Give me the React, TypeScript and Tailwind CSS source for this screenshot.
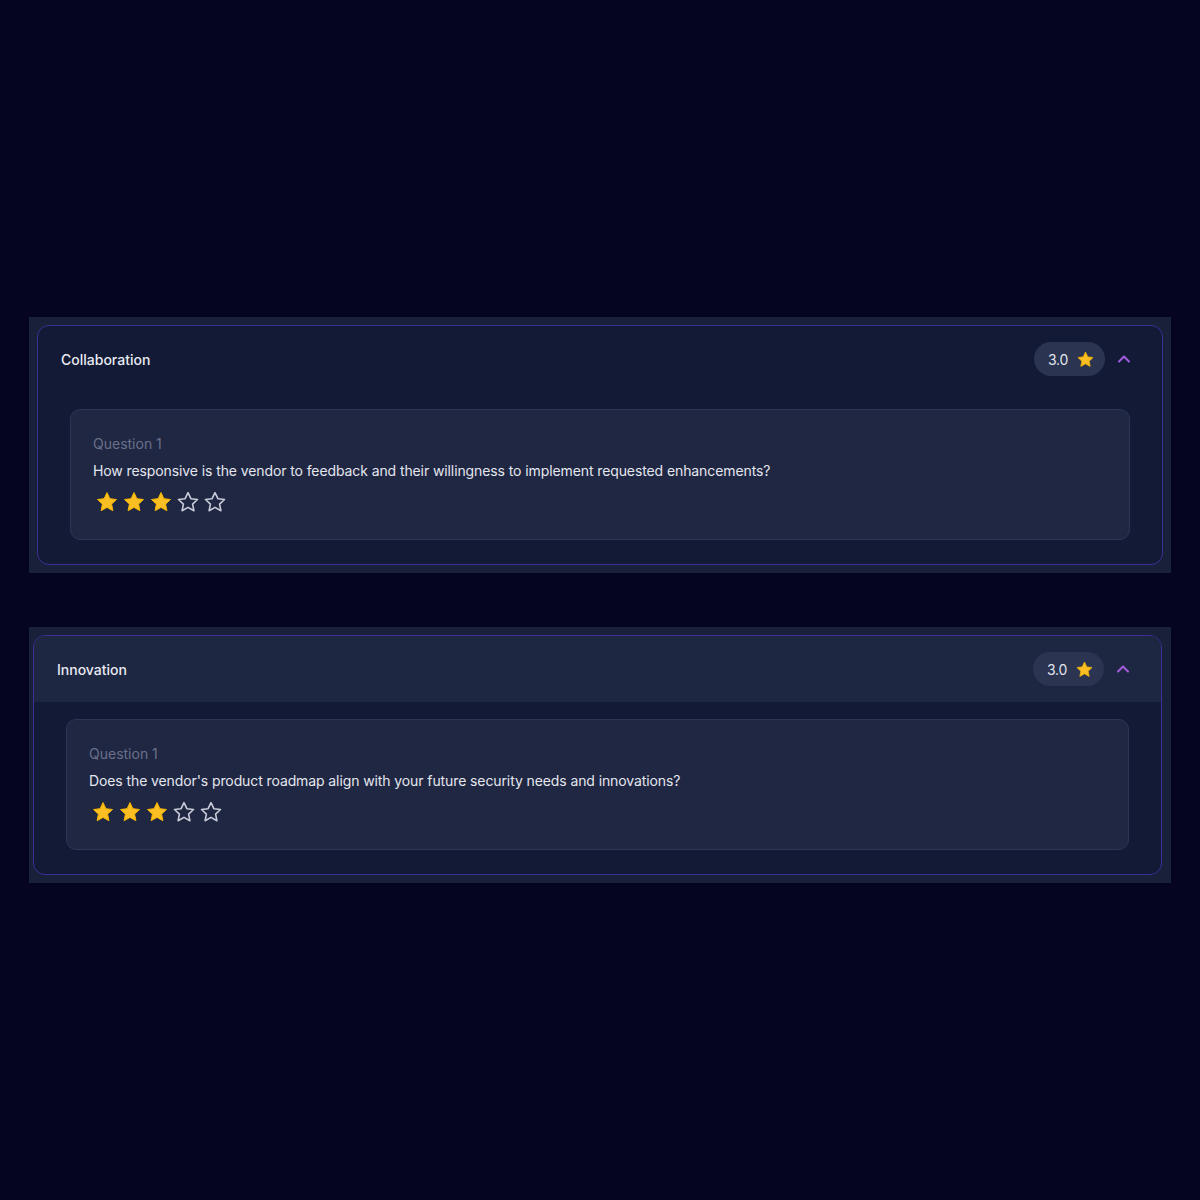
import { ChevronUp } from "lucide-react";

type Section = {
  title: string;
  score: string;
  question: string;
  rating: number;
  highlighted?: boolean;
  outer: string;
};

const sections: Section[] = [
  {
    title: "Collaboration",
    score: "3.0",
    question:
      "How responsive is the vendor to feedback and their willingness to implement requested enhancements?",
    rating: 3,
    outer: "p-2",
  },
  {
    title: "Innovation",
    score: "3.0",
    question:
      "Does the vendor's product roadmap align with your future security needs and innovations?",
    rating: 3,
    highlighted: true,
    outer: "pt-2 pb-2 pl-1 pr-[9px]",
  },
];

function StarIcon({ filled, className }: { filled: boolean; className?: string }) {
  return (
    <svg viewBox="0 0 24 24" className={className}>
      <path
        d="M12 2.6l2.9 6.1 6.6.8-4.9 4.6 1.3 6.6L12 17.4l-5.9 3.3 1.3-6.6-4.9-4.6 6.6-.8z"
        fill={filled ? "#fbbf24" : "none"}
        stroke={filled ? "#f5b400" : "#c9ccd8"}
        strokeWidth={filled ? 1 : 1.6}
        strokeLinejoin="round"
      />
    </svg>
  );
}

function Stars({ value }: { value: number }) {
  return (
    <div className="flex items-center gap-[3px] ml-[2px]">
      {[1, 2, 3, 4, 5].map((n) => (
        <StarIcon key={n} filled={n <= value} className="w-6 h-6" />
      ))}
    </div>
  );
}

function SectionCard({ s }: { s: Section }) {
  return (
    <div className={`bg-[#18203a] ${s.outer}`}>
      <div className="rounded-xl border border-[#3d2e98] bg-[#131a35] overflow-hidden">
        <div
          className={`h-[66px] flex items-center justify-between pl-[23px] pr-7 ${
            s.highlighted ? "bg-[#1e2742]" : ""
          }`}
        >
          <span className="text-[14px] font-medium text-[#e8eaf2]">{s.title}</span>
          <div className="flex items-center gap-[9px]">
            <div className="h-[34px] w-[71px] rounded-full bg-[#2b3451] flex items-center pl-[14px] gap-[8px]">
              <span className="text-[14px] text-[#e2e5ee] tracking-[-0.3px]">{s.score}</span>
              <StarIcon filled className="w-[19px] h-[19px]" />
            </div>
            <ChevronUp className="w-5 h-5 text-[#a15bdc]" strokeWidth={2.5} />
          </div>
        </div>
        <div className="px-8 pt-[17px] pb-6">
          <div className="rounded-[10px] border border-[#2d3656] bg-[#1f2743] px-[22px] pt-6 pb-[25px]">
            <div className="text-[14px] leading-5 text-[#69708a]">Question 1</div>
            <div className="mt-[7px] text-[14px] leading-5 text-[#e4e6ee] tracking-[-0.1px]">
              {s.question}
            </div>
            <div className="mt-[9px]">
              <Stars value={s.rating} />
            </div>
          </div>
        </div>
      </div>
    </div>
  );
}

export default function App() {
  return (
    <div
      className="w-[1200px] h-[1200px] bg-[#06051f] pt-[317px] px-[29px]"
      style={{ fontFamily: "Inter, 'Noto Sans', sans-serif" }}
    >
      <div className="flex flex-col gap-[54px]">
        {sections.map((s) => (
          <SectionCard key={s.title} s={s} />
        ))}
      </div>
    </div>
  );
}
